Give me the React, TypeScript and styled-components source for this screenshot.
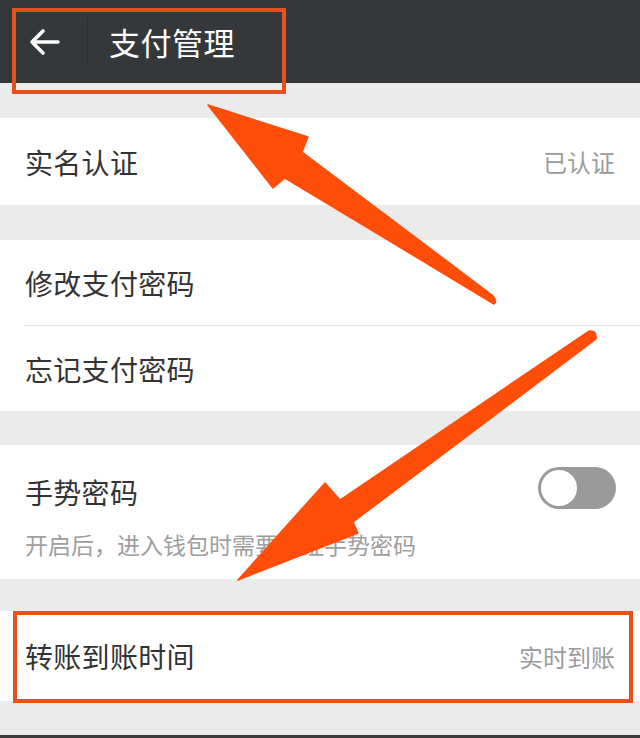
import React from 'react';
import styled, { createGlobalStyle } from 'styled-components';

const GlobalStyle = createGlobalStyle`
  html, body {
    margin: 0;
    padding: 0;
    background: #ebebeb;
  }
  body {
    font-family: "Noto Sans CJK SC", "Noto Sans", sans-serif;
  }
`;

const Page = styled.div`
  position: relative;
  width: 640px;
  height: 738px;
  overflow: hidden;
  background: #ebebeb;
  display: flex;
  flex-direction: column;
`;

const Header = styled.div`
  height: 83px;
  flex-shrink: 0;
  background: #34383b;
  display: flex;
  align-items: center;
`;

const BackButton = styled.div`
  width: 88px;
  height: 48px;
  display: flex;
  align-items: center;
  justify-content: flex-start;
  padding-left: 28px;
  box-sizing: border-box;
  border-right: 1px solid #2b2e30;
`;

const Title = styled.div`
  margin-left: 21px;
  color: #ffffff;
  font-size: 31px;
  line-height: 40px;
  letter-spacing: 0.5px;
`;

const Gap = styled.div<{ h: number }>`
  height: ${(p) => p.h}px;
  flex-shrink: 0;
`;

const Group = styled.div`
  background: #ffffff;
  flex-shrink: 0;
`;

const Row = styled.div<{ h: number }>`
  height: ${(p) => p.h}px;
  display: flex;
  align-items: center;
  justify-content: space-between;
  padding: 0 25px;
`;

const Label = styled.span`
  font-size: 28px;
  color: #333333;
  letter-spacing: 0.3px;
`;

const Value = styled.span`
  font-size: 24px;
  color: #9b9b9b;
`;

const Divider = styled.div`
  height: 1px;
  margin-left: 24px;
  background: #e2e2e2;
`;

const GestureSection = styled.div`
  height: 134px;
  box-sizing: border-box;
  padding: 26px 25px 0;
`;

const GestureHead = styled.div`
  height: 42px;
  display: flex;
  align-items: center;
  justify-content: space-between;
`;

const Hint = styled.div`
  margin-top: 16px;
  font-size: 23px;
  line-height: 30px;
  color: #9e9e9e;
`;

const Toggle = styled.div<{ on: boolean }>`
  width: 78px;
  height: 42px;
  border-radius: 21px;
  background: ${(p) => (p.on ? '#4cd964' : '#9a9a9a')};
  margin-top: -8px;
  margin-right: -1px;
  display: flex;
  align-items: center;
  justify-content: ${(p) => (p.on ? 'flex-end' : 'flex-start')};
  padding: 0 3px;
  box-sizing: border-box;
`;

const Knob = styled.div`
  width: 36px;
  height: 36px;
  border-radius: 50%;
  background: #ffffff;
`;

const BottomEdge = styled.div`
  flex: 1;
  background: #3a3a3a;
`;

const Mark = styled.div<{ x: number; y: number; w: number; h: number }>`
  position: absolute;
  left: ${(p) => p.x}px;
  top: ${(p) => p.y}px;
  width: ${(p) => p.w}px;
  height: ${(p) => p.h}px;
  box-sizing: border-box;
  border: 4px solid #e5511f;
  pointer-events: none;
`;

const Overlay = styled.svg`
  position: absolute;
  left: 0;
  top: 0;
  width: 640px;
  height: 738px;
  pointer-events: none;
`;

const BackIcon = () => (
  <svg width="32" height="28" viewBox="0 0 32 28" fill="none">
    <path
      d="M30 14H4M15 3L4 14l11 11"
      stroke="#ffffff"
      strokeWidth="3.6"
      strokeLinecap="round"
      strokeLinejoin="round"
    />
  </svg>
);

export default function App() {
  return (
    <>
      <GlobalStyle />
      <Page>
        <Header>
          <BackButton>
            <BackIcon />
          </BackButton>
          <Title>支付管理</Title>
        </Header>

        <Gap h={35} />
        <Group>
          <Row h={87}>
            <Label>实名认证</Label>
            <Value>已认证</Value>
          </Row>
        </Group>

        <Gap h={35} />
        <Group>
          <Row h={85}>
            <Label>修改支付密码</Label>
          </Row>
          <Divider />
          <Row h={85}>
            <Label>忘记支付密码</Label>
          </Row>
        </Group>

        <Gap h={34} />
        <Group>
          <GestureSection>
            <GestureHead>
              <Label>手势密码</Label>
              <Toggle on={false}>
                <Knob />
              </Toggle>
            </GestureHead>
            <Hint>开启后，进入钱包时需要验证手势密码</Hint>
          </GestureSection>
        </Group>

        <Gap h={32} />
        <Group>
          <Row h={90}>
            <Label>转账到账时间</Label>
            <Value>实时到账</Value>
          </Row>
        </Group>

        <Gap h={34} />
        <BottomEdge />

        <Mark x={12} y={8} w={274} h={86} />
        <Mark x={13} y={611} w={620} h={92} />

        <Overlay viewBox="0 0 640 738">
          <path
            d="M208 105 L308 137 L302 152 L492 295 Q498 301 494 304 L285 178 L273 188 Z"
            fill="#ff4d0a"
            stroke="#ff4d0a"
            strokeWidth="1.5"
            strokeLinejoin="round"
          />
          <path
            d="M589 331 Q597 330 596 339 L353 522 L358 533 L238 580 L325 483 L340 500 Z"
            fill="#ff4d0a"
            stroke="#ff4d0a"
            strokeWidth="1.5"
            strokeLinejoin="round"
          />
        </Overlay>
      </Page>
    </>
  );
}
